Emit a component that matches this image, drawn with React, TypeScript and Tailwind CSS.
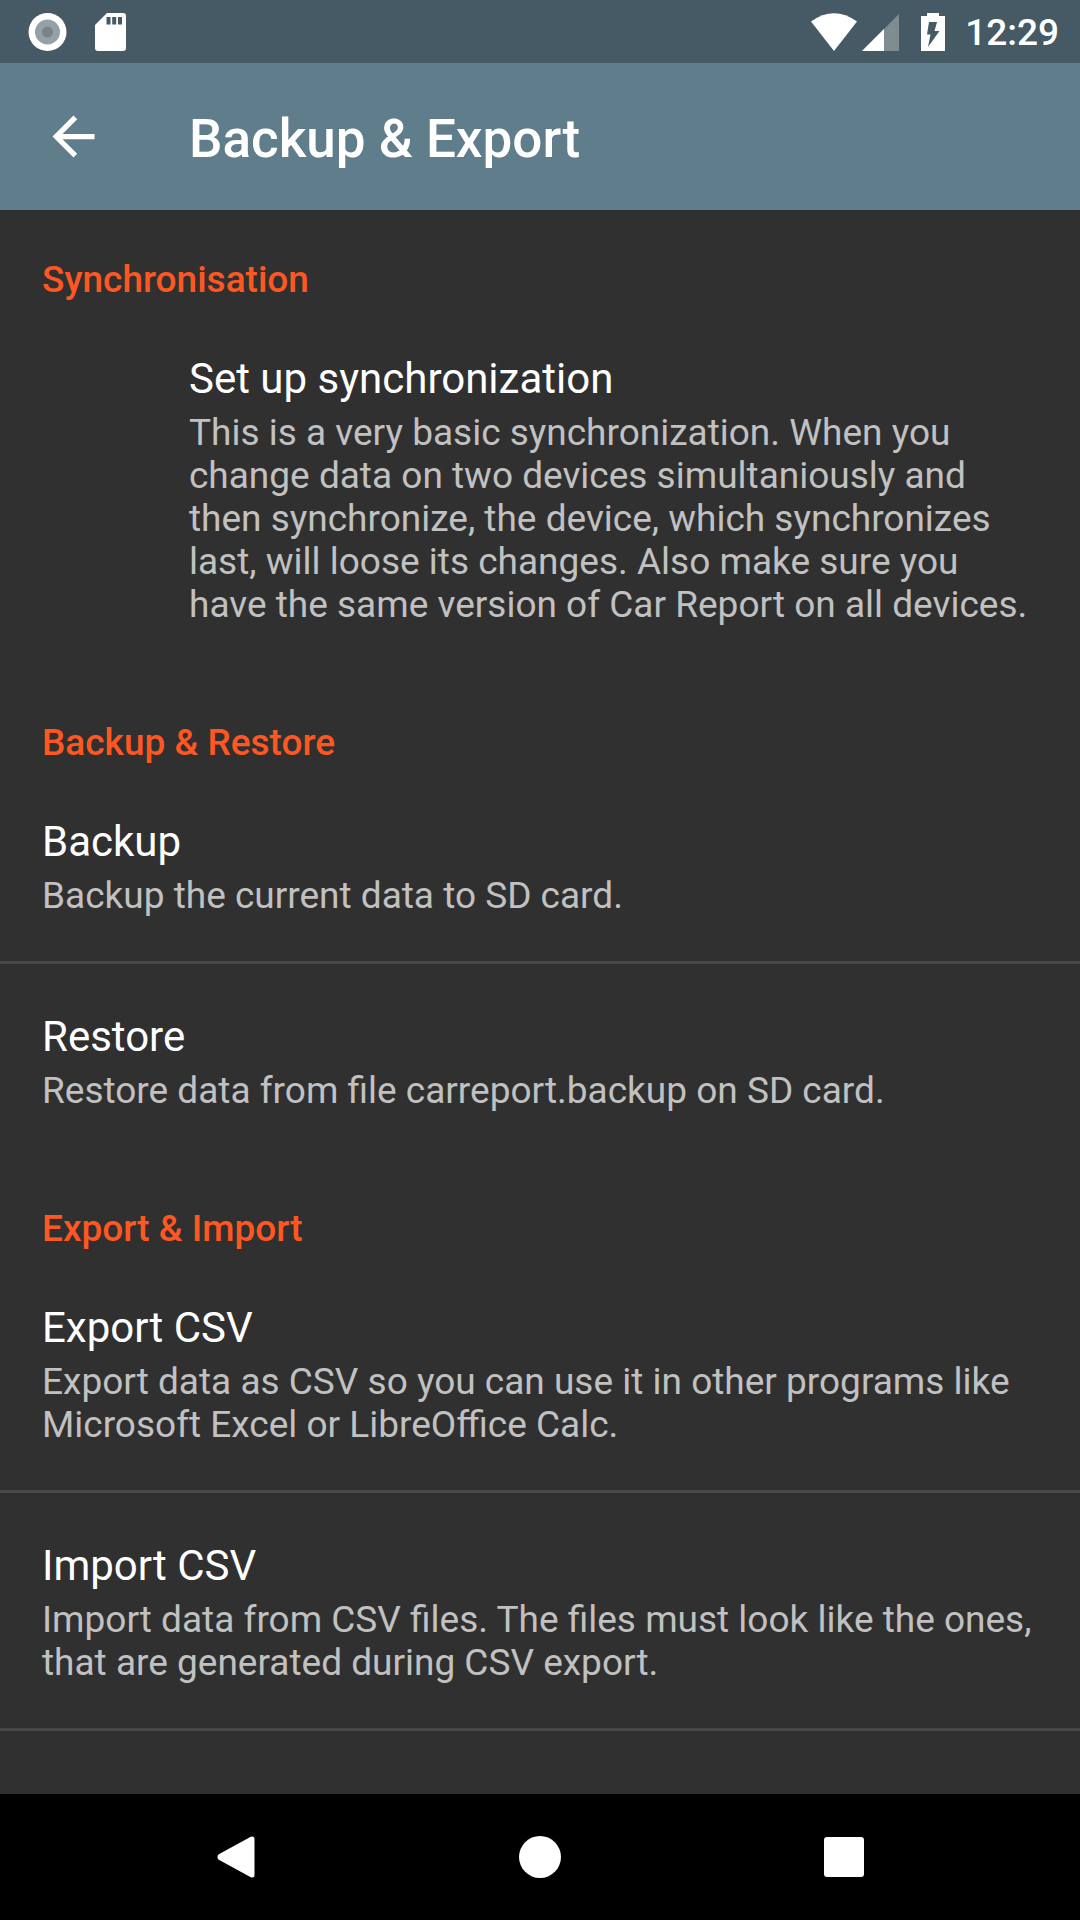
import React from "react";

function Category({ title, children }: { title: string; children: React.ReactNode }) {
  return (
    <section>
      <h2 className="px-[42px] pt-12 pb-[5px] text-[37px] leading-[43px] font-medium text-[#ff5722]">{title}</h2>
      {children}
    </section>
  );
}

function Item({ title, summary, inset, divider }: { title: string; summary: string; inset?: boolean; divider?: boolean }) {
  return (
    <button
      type="button"
      className={`block w-full border-b-[3px] pt-12 pr-[42px] pb-11 text-left ${inset ? "pl-[189px]" : "pl-[42px]"} ${divider ? "border-[#494949]" : "border-transparent"}`}
    >
      <span className="block text-[42px] leading-[49px] text-white">{title}</span>
      <span className="mt-2 block text-[37px] leading-[43px] text-[#c1c1c1]">{summary}</span>
    </button>
  );
}

export default function App() {
  return (
    <div className="flex h-screen flex-col bg-[#303030] font-[Roboto,sans-serif]">
      <div className="flex h-[63px] shrink-0 items-center justify-between bg-[#455a64] pr-[21px] pl-7 text-white">
        <div className="flex items-center gap-7">
          <svg width="39" height="38" viewBox="0 0 38 38">
            <circle cx="19" cy="19" r="19" fill="#fff" />
            <circle cx="19" cy="19" r="12.5" fill="#95a1a7" />
            <circle cx="19" cy="19" r="5.5" fill="#74868d" />
          </svg>
          <svg width="31" height="38" viewBox="0 0 31 38">
            <path d="M12 0H28a3 3 0 0 1 3 3V35a3 3 0 0 1-3 3H3a3 3 0 0 1-3-3V12Z" fill="#fff" />
            <path d="M11.500 4h4v7.500h-4zM17.200 4h4v7.500h-4zM23 4h4v7.500h-4z" fill="#455a64" />
          </svg>
        </div>
        <div className="flex items-center">
          <svg width="46" height="38" viewBox="0 0 46 38"><path d="M0 8.500Q23-8 46 8.500L23 38Z" fill="#fff" /></svg>
          <svg className="ml-[5px]" width="37" height="38" viewBox="0 0 37 38">
            <path d="M37 1V38H0Z" fill="#7f8d93" /><path d="M22 16V38H0Z" fill="#fff" />
          </svg>
          <svg className="ml-[22px]" width="24" height="38" viewBox="0 0 24 38">
            <path d="M6 0h12v3h6v35H0V3h6Z" fill="#fff" /><path d="M8 9H16L13.500 18H18.500L7 34L9.500 21.500H6Z" fill="#455a64" />
          </svg>
          <span className="ml-5 pt-0.5 text-[37px] leading-[44px] font-medium">12:29</span>
        </div>
      </div>
      <header className="flex h-[147px] shrink-0 items-center bg-[#607d8b] text-white">
        <button type="button" aria-label="Back" className="ml-[42px] flex size-[63px] items-center justify-center">
          <svg width="63" height="63" viewBox="0 0 24 24" fill="#fff"><path d="M20 11H7.830l5.590-5.590L12 4l-8 8 8 8 1.410-1.410L7.830 13H20v-2z" /></svg>
        </button>
        <h1 className="ml-[84px] pt-1 text-[53px] leading-[62px] font-medium">Backup &amp; Export</h1>
      </header>
      <main className="min-h-0 flex-1 overflow-hidden">
        <Category title="Synchronisation">
          <Item inset title="Set up synchronization" summary="This is a very basic synchronization. When you change data on two devices simultaniously and then synchronize, the device, which synchronizes last, will loose its changes. Also make sure you have the same version of Car Report on all devices." />
        </Category>
        <Category title="Backup & Restore">
          <Item divider title="Backup" summary="Backup the current data to SD card." />
          <Item title="Restore" summary="Restore data from file carreport.backup on SD card." />
        </Category>
        <Category title="Export & Import">
          <Item divider title="Export CSV" summary="Export data as CSV so you can use it in other programs like Microsoft Excel or LibreOffice Calc." />
          <Item divider title="Import CSV" summary="Import data from CSV files. The files must look like the ones, that are generated during CSV export." />
        </Category>
      </main>
      <nav className="flex h-[126px] shrink-0 items-center justify-center gap-[178px] bg-black">
        <button type="button" aria-label="Back" className="flex w-[126px] justify-center">
          <svg width="42" height="42" viewBox="0 0 42 42"><path d="M37 3V39L5 21.500V20.500Z" fill="#fff" stroke="#fff" strokeWidth="5" strokeLinejoin="round" /></svg>
        </button>
        <button type="button" aria-label="Home" className="flex w-[126px] justify-center">
          <svg width="42" height="42" viewBox="0 0 42 42"><circle cx="21" cy="21" r="21" fill="#fff" /></svg>
        </button>
        <button type="button" aria-label="Recents" className="flex w-[126px] justify-center">
          <svg width="42" height="42" viewBox="0 0 42 42"><rect x="1" y="1" width="40" height="40" rx="3" fill="#fff" /></svg>
        </button>
      </nav>
    </div>
  );
}
